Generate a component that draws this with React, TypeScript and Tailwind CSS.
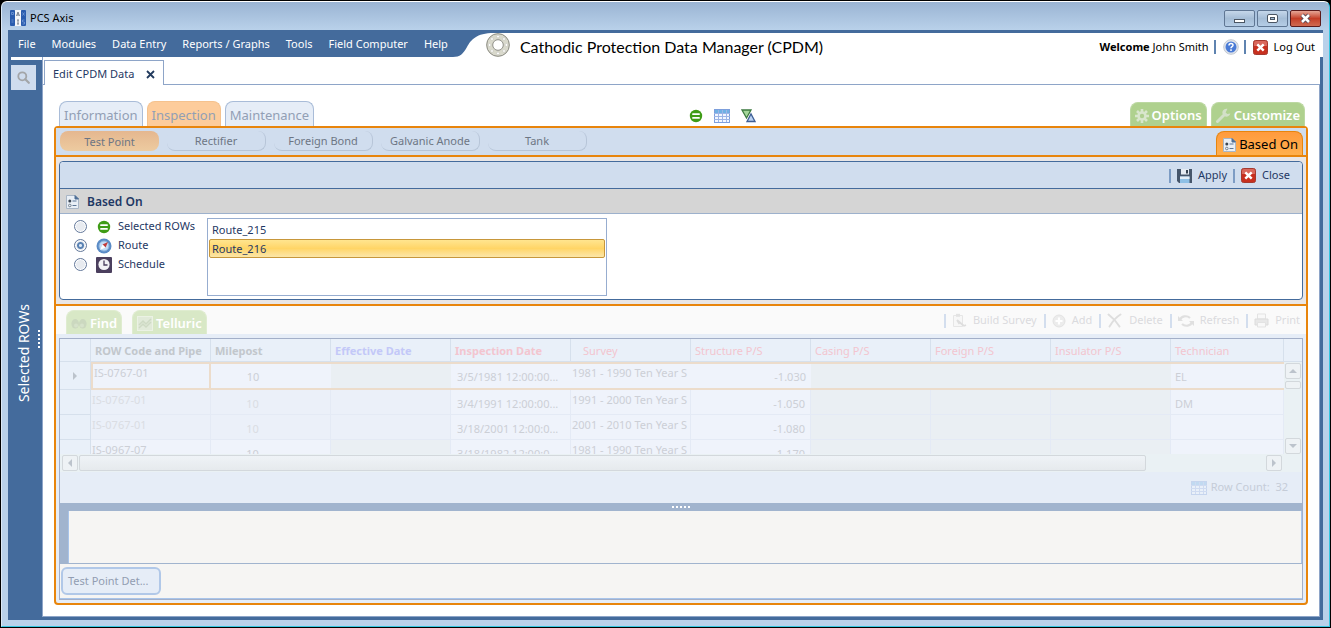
import { useState } from 'react';
import type { ReactNode } from 'react';
import clsx from 'clsx';

interface IconProps {
  className?: string;
}

const AppIcon = () => (
  <svg width="16" height="16" viewBox="0 0 16 16" className="shrink-0">
    <rect width="5" height="16" rx="1" fill="#2a5cae" />
    <rect x="11" width="5" height="16" rx="1" fill="#2a5cae" />
    <rect x="5" width="6" height="16" fill="#f4f6fa" />
    <path d="M6.5 6 8 2l1.5 4M7 5h2M8 10v4M7 10h2M7 14h2" stroke="#6d7684" fill="none" strokeWidth="0.9" />
    <path d="M12.5 2.500l2 3M14.500 2.500l-2 3M14.500 10h-2v2h2v2h-2M1.500 2.500h2v2h-2zM1.500 10h2M1.500 12h2" stroke="#7ba0dd" fill="none" strokeWidth="0.7" />
  </svg>
);

const GasketIcon = () => (
  <svg width="24" height="24" viewBox="0 0 24 24" className="shrink-0">
    <circle cx="12" cy="12" r="8.500" fill="none" stroke="#d9d9cc" strokeWidth="6.500" />
    <circle cx="12" cy="12" r="11.300" fill="none" stroke="#8f8f88" strokeWidth="1" />
    <circle cx="12" cy="12" r="5.300" fill="#fff" stroke="#8f8f88" strokeWidth="1" />
    <g fill="#fff" stroke="#b9b9ae" strokeWidth="0.500">
      <circle cx="12" cy="3.600" r="1.400" />
      <circle cx="18" cy="6" r="1.400" />
      <circle cx="20.400" cy="12" r="1.400" />
      <circle cx="18" cy="18" r="1.400" />
      <circle cx="12" cy="20.400" r="1.400" />
      <circle cx="6" cy="18" r="1.400" />
      <circle cx="3.600" cy="12" r="1.400" />
      <circle cx="6" cy="6" r="1.400" />
    </g>
  </svg>
);

const RowIcon = ({ className }: IconProps) => (
  <svg width="14" height="14" viewBox="0 0 14 14" className={clsx('shrink-0', className)}>
    <circle cx="7" cy="7" r="6.200" fill="#3f9c16" />
    <rect x="3.200" y="4.200" width="7.600" height="1.900" rx="0.500" fill="#fff" />
    <rect x="3.200" y="7.900" width="7.600" height="1.900" rx="0.500" fill="#fff" />
  </svg>
);

const GridIcon = ({ className }: IconProps) => (
  <svg width="16" height="14" viewBox="0 0 16 14" className={clsx('shrink-0', className)}>
    <rect x="0.500" y="0.500" width="15" height="13" fill="#f3f7ff" stroke="#7d9fdc" />
    <rect x="1" y="1" width="14" height="3" fill="#6fb1e4" />
    <path d="M0 4.500h16M0 7.500h16M0 10.500h16M4.500 1v12M8.500 1v12M12.500 1v12" stroke="#9db5e6" fill="none" />
  </svg>
);

const TrianglesIcon = () => (
  <svg width="15" height="14" viewBox="0 0 15 14" className="shrink-0">
    <path d="M1 1h9L5.500 9z" fill="#a5d69a" stroke="#3d7a40" strokeWidth="1.300" />
    <path d="M6 12.500h8L10 5z" fill="#b9d1f2" stroke="#3f5f96" strokeWidth="1.300" />
  </svg>
);

const HelpIcon = () => (
  <svg width="16" height="16" viewBox="0 0 16 16" className="shrink-0">
    <circle cx="8" cy="8" r="7.300" fill="#e1e5ec" stroke="#c3c9d2" />
    <circle cx="8" cy="8" r="5.500" fill="#4a7bd6" />
    <path d="M6 6.500c0-2.600 4-2.600 4-.3 0 1.500-2 1.400-2 3" stroke="#fff" fill="none" strokeWidth="1.500" />
    <rect x="7.200" y="10.300" width="1.600" height="1.600" fill="#fff" />
  </svg>
);

const CloseBoxIcon = () => (
  <svg width="15" height="15" viewBox="0 0 15 15" className="shrink-0">
    <rect x="0.500" y="0.500" width="14" height="14" rx="2" fill="#c8301f" stroke="#a43a30" />
    <path d="M1 3a2 2 0 0 1 2-2h9a2 2 0 0 1 2 2v3H1z" fill="#d9685c" />
    <path d="M4.300 4.300l6.400 6.400M10.700 4.300l-6.400 6.400" stroke="#fff" strokeWidth="2.400" />
  </svg>
);

const SearchIcon = () => (
  <svg width="13" height="13" viewBox="0 0 13 13">
    <circle cx="5.300" cy="5.300" r="4" fill="none" stroke="#a3a5a8" strokeWidth="1.800" />
    <path d="M8.300 8.300l3.500 3.500" stroke="#a3a5a8" strokeWidth="2.200" strokeLinecap="round" />
  </svg>
);

const GearIcon = () => (
  <svg width="14" height="14" viewBox="0 0 14 14" className="shrink-0">
    <g stroke="#d9e6cd" strokeWidth="2.600">
      <path d="M7 0v14M0 7h14M2 2l10 10M12 2L2 12" />
    </g>
    <circle cx="7" cy="7" r="4.700" fill="#d9e6cd" />
    <circle cx="7" cy="7" r="2.200" fill="#afcf90" />
  </svg>
);

const WrenchIcon = () => (
  <svg width="15" height="15" viewBox="0 0 15 15" className="shrink-0">
    <path d="M1.500 13.500l6-6" stroke="#d3e0c8" strokeWidth="3" strokeLinecap="round" />
    <path d="M11.500.8a4 4 0 1 0 2.800 4.700l-3 .6-1.700-1.700z" fill="#d3e0c8" />
  </svg>
);

const FormIcon = () => (
  <svg width="13" height="14" viewBox="0 0 13 14" className="shrink-0">
    <path d="M.5.500h8.500l3.500 3.500v9.500H.5z" fill="#e9eff6" stroke="#a9b6c6" />
    <path d="M9 .5v3.500h3.500z" fill="#4f6f96" stroke="#4f6f96" />
    <circle cx="3.800" cy="6" r="1.500" fill="#3c4754" />
    <circle cx="3.800" cy="10.500" r="1.300" fill="none" stroke="#6c7886" strokeWidth="0.900" />
    <path d="M6.500 6h4M6.500 10.500h4" stroke="#5c7696" strokeWidth="1.200" />
  </svg>
);

const SaveIcon = () => (
  <svg width="15" height="15" viewBox="0 0 15 15" className="shrink-0">
    <path d="M0 1h15v14H2l-2-2z" fill="#46566b" />
    <rect x="4" y="1" width="8" height="5.500" fill="#e5ebf2" />
    <rect x="9" y="2" width="2" height="3.500" fill="#34414f" />
    <rect x="3" y="8.500" width="9.500" height="6.500" fill="#8ec0e6" />
    <rect x="3" y="8.500" width="9.500" height="2.500" fill="#e3edf6" />
  </svg>
);

const CompassIcon = () => (
  <svg width="16" height="16" viewBox="0 0 16 16" className="shrink-0">
    <circle cx="8" cy="8" r="7.500" fill="#5a8bc6" />
    <circle cx="8" cy="8" r="5" fill="#c2dcf5" stroke="#8ab2de" />
    <path d="M12 4L6.500 6.500l3 3z" fill="#c43a3a" />
    <path d="M4 12l2.500-5.500 3 3z" fill="#fff" />
  </svg>
);

const ClockIcon = () => (
  <svg width="16" height="16" viewBox="0 0 16 16" className="shrink-0">
    <rect width="16" height="16" rx="1" fill="#4b3f5e" />
    <circle cx="8" cy="7.500" r="5.600" fill="#f3f2f5" />
    <path d="M8 3.500V8h3.500" stroke="#4b3f5e" fill="none" strokeWidth="1.300" />
  </svg>
);

const BinocularsIcon = () => (
  <svg width="16" height="12" viewBox="0 0 16 12" className="shrink-0">
    <ellipse cx="4.200" cy="5.800" rx="3.800" ry="4.800" fill="#cbd8bf" />
    <ellipse cx="11.800" cy="5.800" rx="3.800" ry="4.800" fill="#cbd8bf" />
    <circle cx="5" cy="7.500" r="2" fill="#d6e2cb" />
    <circle cx="11" cy="7.500" r="2" fill="#d6e2cb" />
  </svg>
);

const ChartIcon = () => (
  <svg width="16" height="15" viewBox="0 0 16 15" className="shrink-0">
    <rect x="0.500" y="0.500" width="15" height="14" fill="#e1ead9" stroke="#ebf2e4" />
    <path d="M2 9l4-4 3 3 5-5M2 12l4-4 3 3 5-5" stroke="#cedac4" fill="none" strokeWidth="1.500" />
  </svg>
);

const BuildIcon = () => (
  <svg width="15" height="15" viewBox="0 0 15 15" className="shrink-0">
    <path d="M1.500 2.500h9v11h-9z" fill="#f7f7f7" stroke="#e6e6e6" />
    <path d="M4 .8h4v3H4z" fill="#e3e3e3" />
    <path d="M5 7l7 6M12 13l2-1M5 7l2.500 4" stroke="#dedede" fill="none" strokeWidth="1.800" />
  </svg>
);

const AddIcon = () => (
  <svg width="14" height="14" viewBox="0 0 14 14" className="shrink-0">
    <circle cx="7" cy="7" r="6" fill="#ececec" stroke="#e3e3e3" />
    <path d="M7 3.500v7M3.500 7h7" stroke="#fff" strokeWidth="2.200" />
  </svg>
);

const DeleteIcon = () => (
  <svg width="16" height="15" viewBox="0 0 16 15" className="shrink-0">
    <path d="M1.500 1.500c4 3 8 7 11 12M13.500 1.500c-5 3-8 7-11 12" stroke="#dedede" fill="none" strokeWidth="2" strokeLinecap="round" />
  </svg>
);

const RefreshIcon = () => (
  <svg width="16" height="14" viewBox="0 0 16 14" className="shrink-0">
    <path d="M2 6c1-4 7-5 10-2M14 8c-1 4-7 5-10 2" stroke="#e0e0e0" fill="none" strokeWidth="2.200" />
    <path d="M0 2v5h5zM16 12V7h-5z" fill="#e0e0e0" />
  </svg>
);

const PrintIcon = () => (
  <svg width="15" height="15" viewBox="0 0 15 15" className="shrink-0">
    <path d="M3.500 1h8v5h-8z" fill="#f8f8f8" stroke="#e3e3e3" />
    <path d="M1 6h13v6H1z" fill="#e8e8e8" stroke="#dcdcdc" />
    <path d="M3.500 9.500h8V14h-8z" fill="#f8f8f8" stroke="#e3e3e3" />
  </svg>
);

const Arrow = ({ d }: { d: string }) => (
  <svg width="8" height="8" viewBox="0 0 8 8">
    <path d={d} fill="#bcc3cc" />
  </svg>
);

const menus = ['File', 'Modules', 'Data Entry', 'Reports / Graphs', 'Tools', 'Field Computer', 'Help'];
const subTabs = ['Test Point', 'Rectifier', 'Foreign Bond', 'Galvanic Anode', 'Tank'];
const routes = ['Route_215', 'Route_216'];

const sources = [
  { name: 'Selected ROWs', icon: <RowIcon className="mx-px" /> },
  { name: 'Route', icon: <CompassIcon /> },
  { name: 'Schedule', icon: <ClockIcon /> },
];

const gridActions = [
  { name: 'Build Survey', icon: <BuildIcon /> },
  { name: 'Add', icon: <AddIcon /> },
  { name: 'Delete', icon: <DeleteIcon /> },
  { name: 'Refresh', icon: <RefreshIcon /> },
  { name: 'Print', icon: <PrintIcon /> },
];

const columns = [
  { name: 'ROW Code and Pipe', style: 'font-bold text-[#c2c7cc]' },
  { name: 'Milepost', style: 'font-bold text-[#c2c7cc]' },
  { name: 'Effective Date', style: 'font-bold text-[#c3c8f8]' },
  { name: 'Inspection Date', style: 'font-bold text-[#f3c5cf]' },
  { name: 'Survey', style: 'pl-2 text-[#f3c5cf]' },
  { name: 'Structure P/S', style: 'text-[#f3c5cf]' },
  { name: 'Casing P/S', style: 'text-[#f3c5cf]' },
  { name: 'Foreign P/S', style: 'text-[#f3c5cf]' },
  { name: 'Insulator P/S', style: 'text-[#f3c5cf]' },
  { name: 'Technician', style: 'text-[#f3c5cf]' },
];

const rows = [
  { row: 'IS-0767-01', milepost: '10', date: '3/5/1981 12:00:00...', survey: '1981 - 1990 Ten Year S', structure: '-1.030', tech: 'EL', locked: false, noEffective: true },
  { row: 'IS-0767-01', milepost: '10', date: '3/4/1991 12:00:00...', survey: '1991 - 2000 Ten Year S', structure: '-1.050', tech: 'DM', locked: true, noEffective: false },
  { row: 'IS-0767-01', milepost: '10', date: '3/18/2001 12:00:0...', survey: '2001 - 2010 Ten Year S', structure: '-1.080', tech: '', locked: true, noEffective: false },
  { row: 'IS-0967-07', milepost: '10', date: '3/18/1982 12:00:0...', survey: '1981 - 1990 Ten Year S', structure: '-1.170', tech: '', locked: false, noEffective: true },
];

const TitleBar = () => (
  <header className="flex h-7 items-center justify-between pl-0.5">
    <div className="flex items-center gap-1 pt-1 text-[11px] text-black">
      <AppIcon />
      <span>PCS Axis</span>
    </div>
    <div className="flex gap-0.5 pt-1 pr-0.5">
      <button aria-label="Minimize" className="flex h-[17px] w-[31px] items-center justify-center rounded-xs border border-[#5f7693] bg-linear-to-b from-[#c5d7ea] via-[#a5bdd6] to-[#b5cde6]">
        <span className="mt-1.5 h-1 w-[11px] border border-[#4a5563] bg-white" />
      </button>
      <button aria-label="Maximize" className="flex h-[17px] w-[31px] items-center justify-center rounded-xs border border-[#5f7693] bg-linear-to-b from-[#c5d7ea] via-[#a5bdd6] to-[#b5cde6]">
        <span className="flex h-[9px] w-[11px] items-center justify-center rounded-xs border border-[#4a5563] bg-white">
          <span className="h-[3px] w-[5px] border border-[#4a5563] bg-[#a5bdd6]" />
        </span>
      </button>
      <button aria-label="Close window" className="flex h-[17px] w-[31px] items-center justify-center rounded-xs border border-[#5d1b1b] bg-linear-to-b from-[#e5a596] via-[#c43d26] to-[#cf6a50]">
        <svg width="13" height="11" viewBox="0 0 13 11">
          <path d="M3 2l7 7M10 2L3 9" stroke="#5a4a55" strokeWidth="4.500" />
          <path d="M3 2l7 7M10 2L3 9" stroke="#fff" strokeWidth="2.500" />
        </svg>
      </button>
    </div>
  </header>
);

const MenuBar = () => (
  <div className="flex h-[27px]">
    <nav className="flex items-center gap-4 bg-[#446b9c] pt-px pl-2.5 text-[11px] text-white">
      {menus.map((menu) => (
        <button key={menu} className="whitespace-nowrap">{menu}</button>
      ))}
    </nav>
    <svg width="46" height="27" viewBox="0 0 46 27" className="shrink-0">
      <path d="M0 0H46V3C28 3 23 10 19 17C15 24 12 27 5 27H0Z" fill="#446b9c" />
    </svg>
    <div className="flex min-w-0 flex-1 items-center justify-between border-t-3 border-[#446b9c] pr-2">
      <div className="-ml-2 flex items-center gap-2.5">
        <GasketIcon />
        <h1 className="pt-1 font-[Lato,sans-serif] text-[16px] leading-5 whitespace-nowrap text-black">
          Cathodic Protection Data Manager (CPDM)
        </h1>
      </div>
      <div className="flex items-center gap-[5px] pt-1 text-[11px] whitespace-nowrap text-black">
        <span><b>Welcome</b> John Smith</span>
        <span className="h-3.5 w-0.5 bg-[#5f83b0]" />
        <button aria-label="Help contents" className="ml-0.5"><HelpIcon /></button>
        <span className="h-3.5 w-0.5 bg-[#5f83b0]" />
        <button className="ml-0.5 flex items-center gap-1.5"><CloseBoxIcon />Log Out</button>
      </div>
    </div>
  </div>
);

const Sidebar = () => (
  <aside className="flex w-[34px] bg-[#446b9c] pl-[3px]">
    <div className="flex flex-1 flex-col items-center pt-[5px]">
      <button aria-label="Search" className="flex size-[25px] items-center justify-center bg-[#cfdcee]">
        <SearchIcon />
      </button>
      <div className="flex flex-1 items-center">
        <span className="rotate-180 text-[14px] leading-5 whitespace-nowrap text-white [writing-mode:vertical-rl]">Selected ROWs</span>
      </div>
    </div>
    <div className="flex w-1.5 flex-col items-center justify-center gap-0.5">
      {[0, 1, 2, 3, 4].map((dot) => (
        <span key={dot} className="size-0.5 bg-white" />
      ))}
    </div>
  </aside>
);

const GreenTab = ({ icon, children, faded }: { icon: ReactNode; children: ReactNode; faded?: boolean }) => (
  <button
    className={clsx(
      'flex h-6 items-center gap-[3px] rounded-t-lg border border-b-0 px-1 pt-0.5 text-[13px] font-semibold whitespace-nowrap text-white',
      faded ? 'border-[#dfecd0] bg-[#d8e8c6]' : 'border-[#bcd8a2] bg-[#afd18e]',
    )}
  >
    {icon}
    {children}
  </button>
);

const BasedOnPanel = () => {
  const [source, setSource] = useState('Route');
  const [route, setRoute] = useState('Route_216');

  return (
    <section className="rounded-sm border border-[#446b9c] bg-white">
      <div className="flex h-[27px] items-center justify-end gap-1.5 rounded-t-sm border-b border-[#446b9c] bg-[#d0ddee] pt-px pr-3 text-[11px] text-[#1f3864]">
        <span className="h-3.5 w-0.5 bg-[#7d9cc4]" />
        <button className="flex items-center gap-1.5"><SaveIcon />Apply</button>
        <span className="h-3.5 w-0.5 bg-[#7d9cc4]" />
        <button className="flex items-center gap-1.5"><CloseBoxIcon />Close</button>
      </div>
      <div className="flex h-[25px] items-center gap-2 border-b border-[#9db1cc] bg-[#d5d5d5] pt-px pl-1.5">
        <FormIcon />
        <h2 className="text-[12px] font-semibold text-[#1f3864]">Based On</h2>
      </div>
      <div className="flex px-3.5 pt-1 pb-[3px]">
        <fieldset className="-mt-px flex w-[133px] flex-col text-[11px] text-[#1f3864]">
          {sources.map(({ name, icon }) => (
            <label key={name} className="flex h-[19px] items-center gap-1.5 whitespace-nowrap">
              <input
                type="radio"
                name="source"
                checked={source === name}
                onChange={() => setSource(name)}
                className="mr-[3px] size-[13px] appearance-none rounded-full border border-[#64799b] bg-[#e8ebf0] shadow-[inset_0_0_0_1px_white] checked:bg-[radial-gradient(circle,#dbe8f6_0_1px,#5b83b4_2px_3px,#e8ebf0_4px)]"
              />
              {icon}
              {name}
            </label>
          ))}
        </fieldset>
        <ul className="h-[78px] w-[400px] border border-[#97add0] px-px pt-px text-[11px] text-[#1f3864]">
          {routes.map((name) => (
            <li key={name}>
              <button
                onClick={() => setRoute(name)}
                className={clsx(
                  'block h-[19px] w-full rounded-xs border pl-0.5 text-left leading-4',
                  route === name
                    ? 'border-[#c7973b] bg-linear-to-b from-[#ffe58f] via-[#ffd566] to-[#fbe6a8]'
                    : 'border-transparent',
                )}
              >
                {name}
              </button>
            </li>
          ))}
        </ul>
      </div>
    </section>
  );
};

const scrollButton = 'flex h-4 w-4 items-center justify-center rounded-xs border border-[#d3d8dc] bg-[#eef2f5]';

const DataGrid = () => (
  <div>
    <div className="flex h-[115px] overflow-hidden bg-[#eaf1f4]">
      <table className="w-full flex-1 table-fixed border-separate border-spacing-0 text-[11px] leading-4">
        <colgroup>
          <col className="w-[31px]" />
          {columns.map(({ name }) => (
            <col key={name} className={name === 'Technician' ? 'w-auto' : 'w-[120px]'} />
          ))}
        </colgroup>
        <thead>
          <tr className="h-[23px] bg-[#e9f0f9]">
            <th className="border-r border-b border-[#d6e0ec]" />
            {columns.map(({ name, style }) => (
              <th key={name} className="overflow-hidden border-r border-b border-[#d6e0ec] px-1 pt-px text-left font-normal whitespace-nowrap">
                <span className={style}>{name}</span>
              </th>
            ))}
          </tr>
        </thead>
        <tbody>
          {rows.map((item, index) => {
            const current = index === 0;
            const cell = clsx(
              'overflow-hidden align-top whitespace-nowrap',
              current ? 'border-y-2 border-[#ecdccb]' : 'border-r border-b border-[#e4eaf5]',
            );
            const high = current ? 'pt-px' : 'pt-0.5';
            const low = current ? 'pt-[5px]' : 'pt-1.5';
            const plain = 'bg-[#eff3fb] text-[#cccfd6]';
            const keyed = item.locked ? 'bg-[#ebf0f9] text-[#dadde3]' : plain;
            const empty = 'bg-[#eaeff3]';

            return (
              <tr key={index} className={current ? 'h-7' : 'h-[25px]'}>
                <td className="border-r border-b border-[#d6e0ec] bg-[#e9f0f9] text-center">
                  {current && <span className="inline-block"><Arrow d="M2 0l4 4-4 4z" /></span>}
                </td>
                <td className={clsx(cell, high, keyed, 'pl-px', current && 'border-x-2')}>{item.row}</td>
                <td className={clsx(cell, low, keyed, 'pr-9 text-center')}>{item.milepost}</td>
                <td className={clsx(cell, item.noEffective ? empty : keyed)} />
                <td className={clsx(cell, low, plain, 'pl-1.5')}>{item.date}</td>
                <td className={clsx(cell, high, plain, 'pl-px')}>{item.survey}</td>
                <td className={clsx(cell, low, plain, 'pr-[5px] text-right')}>{item.structure}</td>
                <td className={clsx(cell, empty)} />
                <td className={clsx(cell, empty)} />
                <td className={clsx(cell, empty)} />
                <td className={clsx(cell, low, plain, 'pl-1')}>{item.tech}</td>
              </tr>
            );
          })}
        </tbody>
      </table>
      <div className="flex w-[18px] flex-col items-center">
        <div className="h-[23px] w-full shrink-0 border-b border-[#d6e0ec] bg-[#e9f0f9]" />
        <button aria-label="Scroll up" className={clsx(scrollButton, 'mt-px')}><Arrow d="M0 6l4-4 4 4z" /></button>
        <span className="mt-0.5 h-2 w-4 rounded-xs border border-[#d3d8dc] bg-[#eef2f5]" />
        <button aria-label="Scroll down" className={clsx(scrollButton, 'mt-auto')}><Arrow d="M0 2l4 4 4-4z" /></button>
      </div>
    </div>
    <div className="flex h-[18px] items-center bg-[#eaf1f4] pr-5 pl-0.5">
      <button aria-label="Scroll left" className={scrollButton}><Arrow d="M6 0L2 4l4 4z" /></button>
      <div className="flex-1 px-px">
        <span className="block h-4 w-[90%] rounded-xs border border-[#d3d8dc] bg-linear-to-b from-[#eff3f7] to-[#e6eaed]" />
      </div>
      <button aria-label="Scroll right" className={scrollButton}><Arrow d="M2 0l4 4-4 4z" /></button>
    </div>
  </div>
);

const App = () => {
  const [subTab, setSubTab] = useState('Test Point');

  return (
    <div className="min-h-screen bg-black p-px font-['Noto_Sans',sans-serif]">
      <div className="flex min-h-[calc(100vh-2px)] flex-col rounded-t-md border border-t-white border-r-[#35c5e0] border-b-[#35c5e0] border-l-[#dce9f6] bg-[linear-gradient(#9ab4d3,#b9d1ea_28px)] px-1.5 pb-1.5">
        <TitleBar />
        <div className="flex flex-1 flex-col bg-white">
          <MenuBar />
          <div className="flex flex-1 border-r-3 border-b-3 border-l-3 border-[#446b9c]">
            <div className="-ml-[3px] flex flex-col pt-[3px]">
              <div className="flex flex-1"><Sidebar /></div>
            </div>
            <main className="flex min-w-0 flex-1 flex-col border-b border-l border-[#8ea5c8] pt-[3px]">
              <div className="flex text-[11px] text-[#1f3864]">
                <div className="w-px border-b border-[#8ea5c8]" />
                <div className="flex h-[25px] items-center gap-3 border border-b-0 border-[#8ea5c8] px-2 pt-0.5">
                  <span>Edit CPDM Data</span>
                  <button aria-label="Close tab">
                    <svg width="9" height="9" viewBox="0 0 9 9">
                      <path d="M1 1l7 7M8 1L1 8" stroke="#223b5e" strokeWidth="1.800" />
                    </svg>
                  </button>
                </div>
                <div className="flex-1 border-b border-[#8ea5c8]" />
              </div>

              <div className="flex flex-1 flex-col border-r border-[#8ea5c8] px-[11px] pt-4 pb-[11px]">
                <div className="flex h-[25px] items-end pr-[3px] pl-[5px]">
                  <div className="flex flex-1 gap-1 text-[13px] text-[#929fb5]">
                    <button className="h-[25px] rounded-t-lg border border-b-0 border-[#a9bcd8] bg-[#e6edf7] px-1 pt-[3px]">Information</button>
                    <button className="h-[25px] rounded-t-lg border border-b-0 border-[#f5c28e] bg-[#fdcc9b] px-1 pt-[3px]">Inspection</button>
                    <button className="h-[25px] rounded-t-lg border border-b-0 border-[#a9bcd8] bg-[#e6edf7] px-1 pt-[3px]">Maintenance</button>
                  </div>
                  <div className="flex items-center gap-[11px] pb-[3px] pl-20">
                    <button aria-label="ROWs"><RowIcon /></button>
                    <button aria-label="Grid"><GridIcon /></button>
                    <button aria-label="Compare"><TrianglesIcon /></button>
                  </div>
                  <div className="flex flex-1 justify-end gap-1">
                    <GreenTab icon={<GearIcon />}>Options</GreenTab>
                    <GreenTab icon={<WrenchIcon />}>Customize</GreenTab>
                  </div>
                </div>

                <div className="flex flex-1 flex-col rounded-sm border-2 border-[#e8850c] bg-[#e6edf7]">
                  <div className="flex h-[27px] items-end justify-between bg-[#d0ddee] pr-[3px] pl-1">
                    <div className="flex gap-2 pb-1 text-[11px]">
                      {subTabs.map((name) => (
                        <button
                          key={name}
                          onClick={() => setSubTab(name)}
                          className={clsx(
                            'h-5 w-[99px] rounded-lg pt-0.5 whitespace-nowrap text-[#6d7684]',
                            subTab === name
                              ? 'bg-linear-to-b from-[#e5b78f] to-[#edcba0]'
                              : 'border-r border-b border-[#b7c5d8] bg-[#d0ddee]',
                          )}
                        >
                          {name}
                        </button>
                      ))}
                    </div>
                    <button className="flex h-6 items-center gap-[3px] rounded-t-lg border border-b-0 border-[#e8850c] bg-linear-to-b from-[#ff9a3d] to-[#ffb04d] pt-0.5 pr-1 pl-1.5 text-[13px] whitespace-nowrap text-black">
                      <FormIcon />
                      Based On
                    </button>
                  </div>

                  <div className="border-y-2 border-[#e8850c] bg-[#e9e6e6] px-[3px] py-1">
                    <BasedOnPanel />
                  </div>

                  <div className="flex h-[28px] items-end justify-between bg-[#fafafa] pl-2.5">
                    <div className="flex gap-2.5">
                      <GreenTab faded icon={<BinocularsIcon />}>Find</GreenTab>
                      <GreenTab faded icon={<ChartIcon />}>Telluric</GreenTab>
                    </div>
                    <div className="flex h-full items-center gap-[7px] pt-px pr-1.5 text-[11px] text-[#dadbde]">
                      {gridActions.map(({ name, icon }) => (
                        <div key={name} className="flex items-center gap-1.5">
                          <span className="h-3.5 w-0.5 bg-[#d3deee]" />
                          <button className="flex items-center gap-1.5 whitespace-nowrap">{icon}{name}</button>
                        </div>
                      ))}
                    </div>
                  </div>

                  <div className="flex flex-1 flex-col px-[3px] pt-1 pb-[3px]">
                    <div className="flex flex-1 flex-col border border-[#a3afc8]">
                      <DataGrid />
                      <div className="flex h-[31px] items-center justify-end gap-1 pr-3.5 text-[11px] text-[#c5ccd8]">
                        <GridIcon className="opacity-30" />
                        <span>Row Count:&nbsp; 32</span>
                      </div>
                      <div className="flex h-2 items-center justify-center gap-0.5 bg-[#a1b4ce]">
                        {[0, 1, 2, 3, 4].map((dot) => (
                          <span key={dot} className="size-0.5 bg-white" />
                        ))}
                      </div>
                      <div className="flex min-h-[52px] flex-1 border-b border-[#a1b4ce] bg-[#a1b4ce]">
                        <div className="ml-2 flex-1 border-x border-[#a8c4ea] bg-[#f6f5f3]" />
                      </div>
                      <div className="flex items-start border-b border-[#a8c4ea] bg-[#f6f5f3] pt-[3px] pb-[3px] pl-px">
                        <button className="h-7 w-[100px] rounded-md border-2 border-[#b1c8e8] bg-[#e6edf7] px-[5px] text-left text-[11px] whitespace-nowrap text-[#929db2]">
                          Test Point Det...
                        </button>
                      </div>
                    </div>
                  </div>
                </div>
              </div>
            </main>
          </div>
        </div>
      </div>
    </div>
  );
};

export default App;
